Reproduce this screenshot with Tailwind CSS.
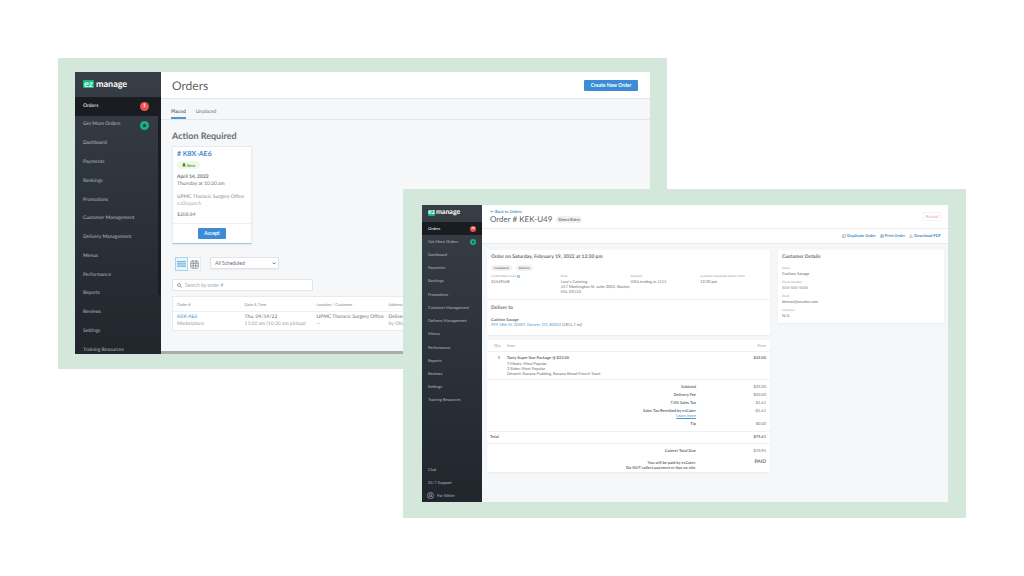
<!DOCTYPE html>
<html lang="en">
<head>
<meta charset="utf-8">
<title>ezManage orders</title>
<script src="https://cdn.jsdelivr.net/npm/@tailwindcss/browser@4"></script>
</head>
<body class="bg-white font-['Lato',sans-serif] text-[#6b6e73] [text-rendering:geometricPrecision]">
<main class="relative min-h-screen overflow-hidden">

  <!-- Orders list window -->
  <section class="absolute top-[58px] left-[58px] right-[357px] bg-[#d3e7db] pt-[14px] pb-[15px] pl-[17px] pr-[17px]" aria-label="Orders">
    <div class="flex h-[282px] overflow-hidden bg-[#f5f7f9]">
      <aside class="relative w-[86px] shrink-0 overflow-hidden bg-linear-to-b from-[#373e46] to-[#20262c] text-[5px] text-[#b4b9be]">
        <div class="flex h-[25px] items-center gap-[2px] pl-[8px] pb-[2px] text-[9px] leading-[9px] font-bold text-white">
          <span class="flex h-[8px] items-center rounded-[1px] bg-[#14b87c] px-[1px] pb-[1px]">ez</span><span>manage</span>
        </div>
        <nav>
          <ul class="flex h-[263px] flex-col">
            <li class="flex-1"><a href="#" class="mr-[3px] flex h-full items-center justify-between bg-[#191d21] pl-[8px] pr-[9px] font-bold text-[#d4d7da]">Orders<span class="flex size-[9px] items-center justify-center rounded-full bg-[#f0524f] text-[5px] text-white">1</span></a></li>
            <li class="flex-1"><a href="#" class="mr-[3px] flex h-full items-center justify-between pl-[8px] pr-[9px]">Get More Orders<svg class="size-[9px]" viewBox="0 0 18 18"><circle cx="9" cy="9" r="9" fill="#14b38c"/><path d="M9 4.500l1.400 2.800 3.100.4-2.300 2.100.6 3.100L9 11.400l-2.800 1.500.6-3.100-2.300-2.100 3.100-.4z" fill="#1b3a38"/></svg></a></li>
            <li class="flex flex-1 items-center pl-[8px]"><a href="#">Dashboard</a></li>
            <li class="flex flex-1 items-center pl-[8px]"><a href="#">Payments</a></li>
            <li class="flex flex-1 items-center pl-[8px]"><a href="#">Rankings</a></li>
            <li class="flex flex-1 items-center pl-[8px]"><a href="#">Promotions</a></li>
            <li class="flex flex-1 items-center pl-[8px]"><a href="#">Customer Management</a></li>
            <li class="flex flex-1 items-center pl-[8px]"><a href="#">Delivery Management</a></li>
            <li class="flex flex-1 items-center pl-[8px]"><a href="#">Menus</a></li>
            <li class="flex flex-1 items-center pl-[8px]"><a href="#">Performance</a></li>
            <li class="flex flex-1 items-center pl-[8px]"><a href="#">Reports</a></li>
            <li class="flex flex-1 items-center pl-[8px]"><a href="#">Reviews</a></li>
            <li class="flex flex-1 items-center pl-[8px]"><a href="#">Settings</a></li>
            <li class="flex flex-1 items-center pl-[8px]"><a href="#">Training Resources</a></li>
          </ul>
        </nav>
        <div class="absolute top-[25px] right-0 h-[198px] w-[3px] rounded-b-full bg-[#1a1e23]"></div>
      </aside>

      <div class="flex min-w-0 flex-1 flex-col">
        <header class="flex h-[27px] shrink-0 items-center justify-between border-b border-[#e6e9ec] bg-white pl-[11px] pr-[12px]">
          <h1 class="pt-[2px] text-[12px] leading-[14px] text-[#5c5f63]">Orders</h1>
          <button class="h-[11px] w-[54px] rounded-[1px] bg-[#3c8bd6] text-[5px] leading-[11px] font-bold text-white">Create New Order</button>
        </header>
        <nav class="flex h-[21px] shrink-0 gap-[10px] border-b border-[#e3e6ea] pl-[10px] text-[5px]">
          <a href="#" class="border-b-2 border-[#4a97d3] pt-[10px] leading-[6px] font-bold">Placed</a>
          <a href="#" class="pt-[10px] leading-[6px]">Unplaced</a>
        </nav>
        <div class="flex flex-1 flex-col pt-[10px] pl-[11px]">
          <h2 class="text-[9px] leading-[12px] font-bold">Action Required</h2>
          <article class="mt-[4px] w-[80px] rounded-[1px] border border-[#e8ebee] border-b-[#9fc6dd] bg-white text-[5px] leading-[7px] shadow-xs">
            <div class="px-[4px] pt-[3px] pb-[4px]">
              <h3 class="text-[7px] leading-[9px] font-bold text-[#4289c8]"># K8X-AE6</h3>
              <p class="mt-[2px] flex h-[8px] w-[23px] items-center justify-center gap-[1px] rounded-full bg-[#eff8e8] text-[4px] font-bold text-[#5b9a3c]"><svg class="size-[4px]" viewBox="0 0 10 10" fill="#4c9130"><path d="M5 0c2 0 3 1.600 3 3.500V6l1.500 2.500h-9L2 6V3.500C2 1.600 3 0 5 0zM3.800 9h2.400L5 10z"/></svg>New</p>
              <p class="mt-[5px] font-bold">April 14, 2022</p>
              <p>Thursday at 10:30 am</p>
              <p class="mt-[6px] whitespace-nowrap text-[#85888d]">UPMC Thoracic Surgery Office</p>
              <p class="text-[#a9acb0]">ezDispatch</p>
              <p class="mt-[4px]">$208.84</p>
            </div>
            <div class="flex h-[20px] items-center justify-center border-t border-[#eef0f2]">
              <button class="h-[11px] w-[28px] rounded-[1px] bg-[#3c8bd6] text-[5px] leading-[11px] font-bold text-white">Accept</button>
            </div>
          </article>
          <div class="mt-[13px] flex pl-[3px]">
            <button aria-label="List view" class="flex h-[14px] w-[13px] items-center justify-center border border-[#a9d6ee] bg-[#e9f6fd]"><svg class="h-[6px] w-[9px]" viewBox="0 0 18 12" fill="none" stroke="#71b1dc" stroke-width="2"><path d="M0 1h18M0 4.500h18M0 8h18M0 11.500h18"/></svg></button>
            <button aria-label="Calendar view" class="flex h-[14px] w-[13px] items-center justify-center border border-l-0 border-[#e9ecef] bg-white"><svg class="size-[9px]" viewBox="0 0 18 18" fill="none" stroke="#85888c" stroke-width="1.600"><rect x="1.500" y="2" width="15" height="14.500" rx="2"/><path d="M1.500 6.500h15M1.500 11.500h15M6.500 4v12M11.500 4v12M5.500 0v4M12.500 0v4"/></svg></button>
            <div class="relative ml-[9px]">
              <select aria-label="Status" class="block h-[12px] w-[69px] appearance-none rounded-[1px] border border-[#e0e4e8] bg-white pl-[4px] text-[5px] leading-[10px] text-[#6b6e73] shadow-xs"><option>All Scheduled</option></select>
              <svg class="absolute top-[5px] right-[3px] h-[3px] w-[4px]" viewBox="0 0 8 6" fill="none" stroke="#4a97d3" stroke-width="2"><path d="M1 1l3 3 3-3"/></svg>
            </div>
          </div>
          <div class="mt-[8px] flex h-[12px] w-[141px] shrink-0 items-center gap-[3px] rounded-[1px] border border-[#e0e4e8] bg-white pl-[4px]">
            <svg class="size-[5px] shrink-0" viewBox="0 0 10 10" fill="none" stroke="#85888c" stroke-width="1.500"><circle cx="4" cy="4" r="3"/><path d="M6.300 6.300L9.500 9.500"/></svg>
            <input type="text" aria-label="Search by order number" placeholder="Search by order #" class="h-[8px] w-full text-[5px] leading-[8px] placeholder:text-[#a9acb0]">
          </div>
          <table class="mt-[5px] mr-[11px] table-fixed border border-[#e8ebee] bg-white text-left text-[5px] leading-[7px] whitespace-nowrap">
            <thead>
              <tr class="h-[15px] border-b border-[#eef0f2] text-[4px] leading-[5px] text-[#85888d]"><th class="w-[68px] pl-[4px] font-normal">Order #</th><th class="w-[72px] pl-[4px] font-normal">Date &amp; Time</th><th class="w-[72px] pl-[4px] font-normal">Location / Customer</th><th class="pl-[4px] font-normal">Address</th></tr>
            </thead>
            <tbody>
              <tr class="h-[19px]"><td class="pl-[4px]"><a href="#" class="block text-[#4a97d3]">K8X-AE6</a><span class="block text-[#989ba0]">Marketplace</span></td><td class="pl-[4px]"><span class="block">Thu, 04/14/22</span><span class="block text-[#989ba0]">11:00 am (10:30 am pickup)</span></td><td class="pl-[4px]"><span class="block">UPMC Thoracic Surgery Office</span><span class="block text-[#989ba0]">—</span></td><td class="pl-[4px]"><span class="block">Delivery</span><span class="block text-[#989ba0]">by Olivia</span></td></tr>
            </tbody>
          </table>
        </div>
        <div class="h-[3px] shrink-0 bg-[#a8aaac]"></div>
      </div>
    </div>
  </section>

  <!-- Order detail window -->
  <section class="absolute top-[189px] left-[403px] right-[58px] bg-[#d3e7db] pt-[16px] pb-[16px] pl-[19px] pr-[18px]" aria-label="Order detail">
    <div class="flex min-h-[297px] bg-[#f5f7f9]">
      <aside class="flex w-[60px] shrink-0 flex-col bg-linear-to-b from-[#373e46] to-[#20262c] text-[4px] text-[#b4b9be]">
        <div class="flex h-[17px] shrink-0 items-center gap-[1px] pl-[6px] pb-[2px] text-[7px] leading-[7px] font-bold text-white">
          <span class="flex h-[6px] items-center rounded-[1px] bg-[#14b87c] pb-[1px]">ez</span><span>manage</span>
        </div>
        <nav class="flex flex-1 flex-col justify-between">
          <ul class="flex h-[185px] flex-col">
            <li class="flex-1"><a href="#" class="flex h-full items-center justify-between bg-[#191d21] pl-[6px] pr-[6px] font-bold text-[#d4d7da]">Orders<span class="flex size-[6px] items-center justify-center rounded-full bg-[#f0524f] text-[3px] text-white">10</span></a></li>
            <li class="flex-1"><a href="#" class="flex h-full items-center justify-between pl-[6px] pr-[6px]">Get More Orders<svg class="size-[6px]" viewBox="0 0 18 18"><circle cx="9" cy="9" r="9" fill="#14b38c"/><path d="M9 4.500l1.400 2.800 3.100.4-2.300 2.100.6 3.100L9 11.400l-2.800 1.500.6-3.100-2.300-2.100 3.100-.4z" fill="#1b3a38"/></svg></a></li>
            <li class="flex flex-1 items-center pl-[6px]"><a href="#">Dashboard</a></li>
            <li class="flex flex-1 items-center pl-[6px]"><a href="#">Payments</a></li>
            <li class="flex flex-1 items-center pl-[6px]"><a href="#">Rankings</a></li>
            <li class="flex flex-1 items-center pl-[6px]"><a href="#">Promotions</a></li>
            <li class="flex flex-1 items-center pl-[6px]"><a href="#">Customer Management</a></li>
            <li class="flex flex-1 items-center pl-[6px]"><a href="#">Delivery Management</a></li>
            <li class="flex flex-1 items-center pl-[6px]"><a href="#">Menus</a></li>
            <li class="flex flex-1 items-center pl-[6px]"><a href="#">Performance</a></li>
            <li class="flex flex-1 items-center pl-[6px]"><a href="#">Reports</a></li>
            <li class="flex flex-1 items-center pl-[6px]"><a href="#">Reviews</a></li>
            <li class="flex flex-1 items-center pl-[6px]"><a href="#">Settings</a></li>
            <li class="flex flex-1 items-center pl-[6px]"><a href="#">Training Resources</a></li>
          </ul>
          <ul class="leading-[13px]">
            <li class="pl-[6px]"><a href="#">Chat</a></li>
            <li class="pl-[6px]"><a href="#">24/7 Support</a></li>
            <li class="pl-[5px]"><a href="#" class="flex items-center gap-[3px]"><svg class="size-[7px]" viewBox="0 0 14 14" fill="none" stroke="#b4b9be" stroke-width="1.200"><circle cx="7" cy="7" r="6.200"/><circle cx="7" cy="5.500" r="2.300"/><path d="M2.800 11.300c1-2 2.500-2.600 4.200-2.600s3.200.6 4.200 2.600"/></svg>Pat White</a></li>
          </ul>
        </nav>
      </aside>

      <div class="min-w-0 flex-1">
        <header class="flex h-[24px] items-start justify-between border-b border-[#eceef1] bg-white pt-[4px] pl-[8px] pr-[7px]">
          <div>
            <a href="#" class="block text-[4px] leading-[5px] font-bold text-[#4a97d3]">← Back to Orders</a>
            <div class="flex items-center gap-[4px]"><h1 class="text-[8px] leading-[11px] text-[#5c5f63]">Order # KEK-U49</h1><span class="rounded-full bg-[#eff1f3] px-[2px] text-[4px] leading-[7px] font-bold">Direct Entry</span></div>
          </div>
          <button class="mt-[3px] h-[9px] w-[18px] rounded-[1px] border border-[#f6f2f3] text-[4px] leading-[7px] text-[#eda4a8]">Refund</button>
        </header>
        <div class="flex h-[15px] items-center justify-end gap-[4px] border-b border-[#e8ebee] bg-white pr-[7px] text-[4px] font-bold text-[#4289c8]">
          <a href="#" class="flex items-center gap-[1px]"><svg class="size-[4px]" viewBox="0 0 10 10" fill="none" stroke="#85888c" stroke-width="1.200"><path d="M3 1h6v7H3zM1 3v6.500h6"/></svg>Duplicate Order</a>
          <a href="#" class="flex items-center gap-[1px]"><svg class="size-[4px]" viewBox="0 0 10 10" fill="none" stroke="#85888c" stroke-width="1.200"><path d="M3 4V1h4v3M3 8H1V4h8v4H7M3 6h4v3.500H3z"/></svg>Print Order</a>
          <a href="#" class="flex items-center gap-[1px]"><svg class="size-[4px]" viewBox="0 0 10 10" fill="none" stroke="#85888c" stroke-width="1.200"><path d="M5 0v6M2.500 4L5 6.500 7.500 4M1 7v2.300h8V7"/></svg>Download PDF</a>
        </div>
        <div class="flex items-start gap-[8px] pt-[6px] pl-[5px] pr-[4px]">
          <div class="flex min-w-0 flex-1 flex-col gap-[5px]">
            <article class="rounded-[1px] bg-white shadow-xs">
              <div class="h-[50px] border-b border-[#eef0f2] pt-[4px] pl-[4px]">
                <h2 class="text-[5px] leading-[7px] font-bold">Order on Saturday, February 19, 2022 at 12:30 pm</h2>
                <p class="mt-[4px] flex gap-[4px] text-[3px] leading-[6px] font-bold"><span class="rounded-full bg-[#eff1f3] px-[3px]">Completed</span><span class="rounded-full bg-[#eff1f3] px-[3px]">Delivery</span></p>
                <dl class="mt-[3px] grid grid-cols-4 text-[4px] leading-[5px]">
                  <div><dt class="flex items-center gap-[1px] text-[3px] text-[#989ba0]">Confirmation Code<svg class="size-[3px]" viewBox="0 0 6 6"><circle cx="3" cy="3" r="2.500" fill="#bfe0f5" stroke="#4a97d3"/></svg></dt><dd>34549568</dd></div>
                  <div><dt class="text-[3px] text-[#989ba0]">Store</dt><dd class="whitespace-nowrap">Lucy's Catering<br>417 Washington St. suite 2002, Boston,<br>MA, 02110</dd></div>
                  <div><dt class="text-[3px] text-[#989ba0]">Payment</dt><dd>VISA ending in 1111</dd></div>
                  <div><dt class="text-[3px] whitespace-nowrap text-[#989ba0]">Customer requested delivery time</dt><dd>12:30 pm</dd></div>
                </dl>
              </div>
              <div class="px-[4px] pt-[5px] pb-[8px] text-[4px] leading-[5px]">
                <h2 class="text-[5px] leading-[7px] font-bold">Deliver to</h2>
                <p class="mt-[5px] font-bold">Cashion Savage</p>
                <p><a href="#" class="text-[#4a97d3]">999 18th St, 2000T, Denver, CO, 80202</a> (1811.7 mi)</p>
              </div>
            </article>

            <article class="rounded-[1px] bg-white text-[4px] shadow-xs">
              <table class="w-full text-left">
                <thead><tr class="h-[11px] border-b border-[#eef0f2] leading-[5px] text-[#989ba0]"><th class="w-[20px] pl-[7px] font-normal">Qty</th><th class="font-normal">Item</th><th class="pr-[4px] text-right font-normal">Price</th></tr></thead>
                <tbody><tr class="h-[28px] border-b border-[#eef0f2] align-top"><td class="pt-[3px] pr-[7px] text-right leading-[6px] font-bold">1</td><td class="pt-[3px] leading-[6px]"><b>Tasty Super Star Package @ $23.00</b><span class="block leading-[5px]">3 Meats: Most Popular<br>3 Sides: Most Popular</span><span class="block leading-[6px]">Dessert: Banana Pudding, Banana Bread French Toast</span></td><td class="pt-[3px] pr-[4px] text-right leading-[6px] font-bold">$23.00</td></tr></tbody>
              </table>
              <dl class="flex h-[52px] flex-col gap-[3px] border-b border-[#eef0f2] pt-[4px] pr-[4px] text-right leading-[5px]">
                <div class="flex justify-end"><dt class="font-bold">Subtotal</dt><dd class="w-[70px]">$23.00</dd></div>
                <div class="flex justify-end"><dt class="font-bold">Delivery Fee</dt><dd class="w-[70px]">$50.00</dd></div>
                <div class="flex justify-end"><dt class="font-bold">7.0% Sales Tax</dt><dd class="w-[70px]">$1.61</dd></div>
                <div class="flex justify-end"><dt class="font-bold">Sales Tax Remitted by ezCater<a href="#" class="block font-normal text-[#4a97d3] underline">Learn more</a></dt><dd class="w-[70px]">-$1.61</dd></div>
                <div class="flex justify-end"><dt class="font-bold">Tip</dt><dd class="w-[70px]">$0.00</dd></div>
              </dl>
              <p class="flex h-[12px] items-center justify-between border-b border-[#eef0f2] pl-[3px] pr-[4px] font-bold"><span>Total</span><span>$74.61</span></p>
              <dl class="flex h-[28px] flex-col gap-[7px] pt-[4px] pr-[4px] text-right leading-[5px]">
                <div class="flex justify-end"><dt class="font-bold">Caterer Total Due</dt><dd class="w-[70px]">$70.95</dd></div>
                <div class="flex justify-end"><dt class="font-bold">You will be paid by ezCater.<br>Do NOT collect payment or tips on site.</dt><dd class="w-[70px] text-[5px] font-bold">PAID</dd></div>
              </dl>
            </article>
          </div>

          <article class="w-[166px] shrink-0 rounded-[1px] bg-white px-[4px] pt-[4px] pb-[4px] shadow-xs">
            <h2 class="text-[5px] leading-[7px] font-bold">Customer Details</h2>
            <dl class="mt-[5px] flex flex-col gap-[3px] text-[4px] leading-[6px]">
              <div><dt class="text-[3px] leading-[5px] text-[#989ba0]">Name</dt><dd>Cashion Savage</dd></div>
              <div><dt class="text-[3px] leading-[5px] text-[#989ba0]">Phone Number</dt><dd>555-555-5555</dd></div>
              <div><dt class="text-[3px] leading-[5px] text-[#989ba0]">Email</dt><dd>demos@ezcater.com</dd></div>
              <div><dt class="text-[3px] leading-[5px] text-[#989ba0]">Company</dt><dd>N/A</dd></div>
            </dl>
          </article>
        </div>
      </div>
    </div>
  </section>
</main>
</body>
</html>
